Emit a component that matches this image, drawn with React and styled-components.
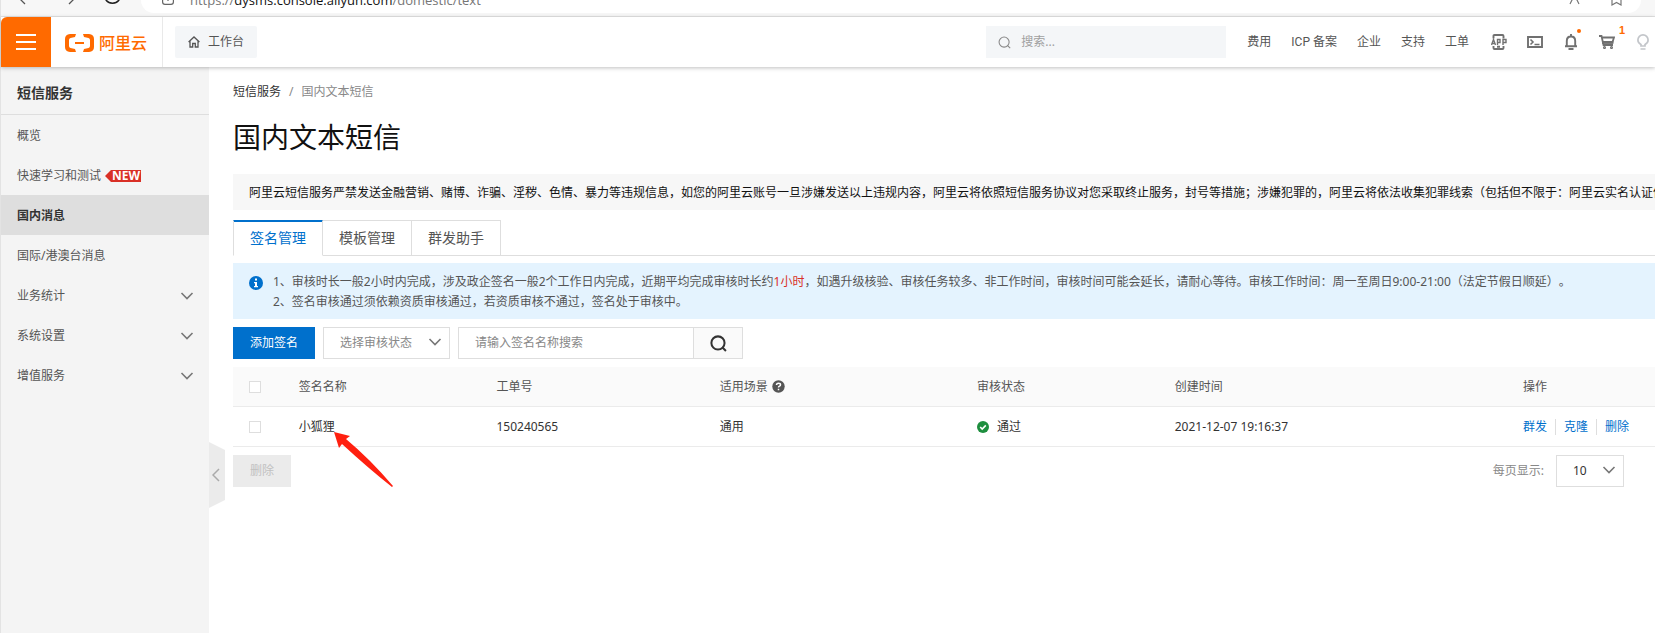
import React from "react";
import styled, { createGlobalStyle, css } from "styled-components";

const Global = createGlobalStyle`
  * { box-sizing: border-box; }
  html, body, #root { height: 100%; }
  body {
    margin: 0;
    background: #fff;
    color: #333;
    font: 12px/20px "Noto Sans", "Noto Sans CJK SC", sans-serif;
    text-spacing-trim: space-all;
    overflow: hidden;
  }
  button, input, select { font: inherit; color: inherit; margin: 0; border-radius: 0; }
  a { color: inherit; text-decoration: none; }
`;

const Page = styled.div`
  display: flex;
  flex-direction: column;
  min-height: 100vh;
  border-left: 1px solid #e3e3e3;
`;

/* browser toolbar */
const Chrome = styled.div`
  height: 17px;
  flex: none;
  display: flex;
  align-items: flex-start;
  background: #f7f7f7;
  border-bottom: 1px solid #e4e4e4;
  overflow: hidden;
`;
const ChromeNav = styled.svg`
  width: 140px;
  height: 16px;
  flex: none;
`;
const Address = styled.div`
  flex: 1;
  height: 13px;
  margin-right: 14px;
  padding: 0 18px 0 20px;
  display: flex;
  align-items: center;
  background: #fff;
  border-radius: 0 0 14px 14px;
  overflow: hidden;
`;
const Url = styled.span`
  flex: 1;
  margin-left: 15px;
  height: 13px;
  display: flex;
  align-items: flex-end;
  font: 13px/26px "Open Sans", sans-serif;
  color: #767676;
  white-space: nowrap;
  b { font-weight: 400; color: #111; }
`;

/* console header */
const Header = styled.header`
  position: relative;
  z-index: 2;
  flex: none;
  height: 50px;
  display: flex;
  align-items: center;
  background: #fff;
  box-shadow: 0 1px 4px rgba(0, 0, 0, 0.25);
`;
const MenuButton = styled.button`
  width: 50px;
  height: 50px;
  padding: 0;
  border: 0;
  background: #ff6a00;
  border-top-left-radius: 6px;
  display: grid;
  place-items: center;
`;
const Logo = styled.a`
  width: 112px;
  height: 50px;
  padding: 2px 0 0 14px;
  display: flex;
  align-items: center;
  gap: 5px;
  color: #ff6a00;
  font-size: 16px;
  font-weight: 500;
  border-right: 1px solid #e9e9e9;
`;
const Workbench = styled.button`
  height: 32px;
  margin-left: 12px;
  padding: 0 13px;
  display: flex;
  align-items: center;
  gap: 8px;
  border: 0;
  border-radius: 2px;
  background: #f4f6f8;
  color: #555;
`;
const HeaderSearch = styled.div`
  margin-left: auto;
  width: 240px;
  height: 32px;
  padding: 0 12px;
  display: flex;
  align-items: center;
  gap: 10px;
  color: #888;
  background: #f4f6f8;
  input { flex: 1; min-width: 0; padding: 0; border: 0; background: none; outline: 0; }
  input::placeholder { color: #a0a0a0; opacity: 1; }
`;
const HeaderNav = styled.nav`
  margin: 0 20px 0 21px;
  display: flex;
  gap: 20px;
  color: #555;
  font-family: Roboto, "Noto Sans CJK SC", sans-serif;
`;
const HeaderIcons = styled.div`
  display: flex;
  align-items: center;
  gap: 16px;
  margin-right: 2px;
`;
const IconButton = styled.button`
  position: relative;
  width: 20px;
  height: 20px;
  padding: 0;
  border: 0;
  background: none;
  display: grid;
  place-items: center;
  color: ${(p) => (p.$faint ? "#c3c6ca" : "#707070")};
`;
const Dot = styled.span`
  position: absolute;
  top: -3px;
  right: 0;
  width: 4px;
  height: 4px;
  border-radius: 50%;
  background: #ff6a00;
`;
const Count = styled.span`
  position: absolute;
  top: -8px;
  right: -8px;
  font: 700 11px/12px "Liberation Sans", sans-serif;
  color: #ff6a00;
`;

/* body */
const Body = styled.div`
  flex: 1;
  display: flex;
`;
const Sidebar = styled.aside`
  position: relative;
  width: 208px;
  flex: none;
  background: #f4f4f4;
`;
const SideTitle = styled.h2`
  margin: 0;
  height: 48px;
  padding-left: 16px;
  font-size: 14px;
  line-height: 52px;
  border-bottom: 1px solid #dedede;
`;
const SideItem = styled.a`
  height: 40px;
  padding: 2px 15px 0 16px;
  display: flex;
  align-items: center;
  color: #555;
  > svg { margin-left: auto; }
  ${(p) => p.$active && css`background: #dedede; color: #333; font-weight: 700;`}
`;
const NewTag = styled.span`
  height: 12px;
  margin-left: 4px;
  padding: 0 1px 0 7px;
  font: 700 12px/12px "Open Sans", sans-serif;
  color: #fff;
  background: #d93026;
  clip-path: polygon(0 50%, 6px 0, 100% 0, 100% 100%, 6px 100%);
`;
const Collapse = styled.button`
  position: absolute;
  top: 375px;
  left: 100%;
  width: 16px;
  height: 66px;
  padding: 0 2px 0 0;
  border: 0;
  background: #ebebeb;
  clip-path: polygon(0 0, 100% 8px, 100% 58px, 0 100%);
  display: grid;
  place-items: center;
`;
const Main = styled.main`
  flex: 1;
  min-width: 0;
  padding: 15px 0 0 24px;
`;
const Crumbs = styled.nav`
  display: flex;
  gap: 8px;
  color: #888;
  a { color: #333; }
`;
const Title = styled.h1`
  margin: 17px 0 19px;
  font-size: 28px;
  font-weight: 400;
  line-height: 36px;
  color: #111;
`;
const Notice = styled.div`
  height: 36px;
  padding-left: 16px;
  line-height: 38px;
  color: #111;
  background: #f7f7f7;
  white-space: nowrap;
  overflow: hidden;
`;
const Tabs = styled.div`
  margin-top: 10px;
  height: 36px;
  display: flex;
  &::after { content: ""; flex: 1; border-bottom: 1px solid #dedede; }
`;
const Tab = styled.button`
  height: 36px;
  padding: 0 16px;
  font-size: 14px;
  line-height: 32px;
  color: #555;
  background: #fff;
  border: 1px solid #dedede;
  border-left: 0;
  ${(p) => p.$active && css`
    color: #0070cc;
    border-left: 1px solid #dedede;
    border-bottom-color: #fff;
    box-shadow: inset 0 1px #0070cc;
    border-top-color: #0070cc;
  `}
`;
const Info = styled.div`
  margin-top: 7px;
  height: 56px;
  padding: 9px 16px 0;
  display: flex;
  gap: 10px;
  color: #555;
  background: #e4f3fe;
  white-space: nowrap;
  svg { margin-top: 4px; flex: none; }
  p { margin: 0; }
  em { font-style: normal; color: #d93026; }
`;
const Toolbar = styled.div`
  margin: 8px 0;
  display: flex;
  gap: 8px;
`;
const Button = styled.button`
  height: 32px;
  padding: 0 17px;
  border: 0;
  color: #fff;
  background: #0070cc;
  &:disabled { color: #c1c1c1; background: #ebebeb; }
`;
const SelectBox = styled.span`
  position: relative;
  width: ${(p) => p.$width}px;
  height: 32px;
  color: ${(p) => (p.$muted ? "#888" : "#333")};
  select {
    width: 100%;
    height: 100%;
    padding: 0 30px 0 16px;
    appearance: none;
    border: 1px solid #dedede;
    background: #fff;
  }
  svg { position: absolute; right: 8px; top: 8px; pointer-events: none; }
`;
const Search = styled.div`
  display: flex;
  width: 285px;
  height: 32px;
  border: 1px solid #dedede;
  input { flex: 1; min-width: 0; padding: 0 16px; border: 0; outline: 0; }
  input::placeholder { color: #888; opacity: 1; }
  button {
    width: 49px;
    padding: 0;
    border: 0;
    border-left: 1px solid #dedede;
    background: #fafafa;
    display: grid;
    place-items: center;
  }
`;
const Table = styled.table`
  width: 100%;
  table-layout: fixed;
  border-collapse: separate;
  border-spacing: 0;
  th, td {
    height: 40px;
    padding: 0 16px;
    text-align: left;
    font-weight: 400;
    border-bottom: 1px solid #ebebeb;
    white-space: nowrap;
  }
  th { background: #fafafa; color: #555; }
`;
const Col = styled.col`
  width: ${(p) => p.$width};
`;
const Check = styled.input`
  appearance: none;
  display: block;
  width: 12px;
  height: 12px;
  border: 1px solid #dedede;
  background: #fff;
`;
const WithIcon = styled.span`
  display: flex;
  align-items: center;
  gap: ${(p) => p.$gap}px;
`;
const Actions = styled.div`
  display: flex;
  color: #0070cc;
  line-height: 16px;
  a + a { margin-left: 8px; padding-left: 8px; border-left: 1px solid #dedede; }
`;
const Footer = styled.div`
  margin-top: 8px;
  padding-right: 31px;
  display: flex;
  align-items: center;
  justify-content: space-between;
`;
const PageSize = styled.label`
  display: flex;
  align-items: center;
  gap: 12px;
  color: #888;
`;
const Arrow = styled.svg`
  position: absolute;
  left: 334px;
  top: 432px;
  z-index: 3;
  pointer-events: none;
`;

const Chevron = () => (
  <svg width="14" height="14" viewBox="0 0 14 14" fill="none" stroke="#777" strokeWidth="1.6">
    <path d="M1.5 4l5.5 5.5L12.5 4" />
  </svg>
);
const Magnifier = ({ size, width = 1.3 }) => (
  <svg width={size} height={size} viewBox="0 0 16 16" fill="none" stroke="currentColor" strokeWidth={width}>
    <circle cx="7.5" cy="7.5" r="6.2" />
    <path d="M11.5 11.5l3.5 3.5" />
  </svg>
);

const side = [
  { label: "概览" },
  { label: "快速学习和测试", tag: "NEW" },
  { label: "国内消息", active: true },
  { label: "国际/港澳台消息" },
  { label: "业务统计", open: true },
  { label: "系统设置", open: true },
  { label: "增值服务", open: true },
];

const columns = ["3.5%", "13.9%", "15.7%", "18.1%", "13.9%", "24.5%", "auto"];

export default function App() {
  return (
    <>
      <Global />
      <Page>
        <Chrome>
          <ChromeNav viewBox="0 0 140 16" fill="none" stroke="#555" strokeWidth="1.3">
            <path d="M24 4l-5-5M68 4l5-5" />
            <path d="M104 -2a8 8 0 0 0 15 0" stroke="#222" strokeWidth="1.5" />
          </ChromeNav>
          <Address>
            <svg width="14" height="13" fill="none" stroke="#666" strokeWidth="1.2">
              <path d="M1.600-2v4q0 2.400 2.400 2.400h6q2.400 0 2.400-2.400v-4M7-1v2" />
            </svg>
            <Url><span>https://<b>dysms.console.aliyun.com</b>/domestic/text</span></Url>
            <svg width="54" height="13" fill="none" stroke="#777" strokeWidth="1.2">
              <path d="M1 4l3-6M10 4l-3-6M43-2v7l4.500-2.500L52 5v-7" />
            </svg>
          </Address>
        </Chrome>

        <Header>
          <MenuButton aria-label="菜单">
            <svg width="20" height="16" stroke="#fff" strokeWidth="2">
              <path d="M0 1h20M0 8h20M0 15h20" />
            </svg>
          </MenuButton>
          <Logo href="#">
            <svg width="29" height="18" viewBox="0 0 29 18" fill="#ff6a00">
              <path d="M11 0l-1 3-4.500 1Q4 4.400 4 6v6q0 1.600 1.500 2l4.500 1 1 3H5q-5-.5-5-5V5q0-4.500 5-5zM18 0l1 3 4.500 1q1.500.4 1.500 2v6q0 1.600-1.500 2L19 15l-1 3h6q5-.5 5-5V5q0-4.500-5-5zM10 8h9v2h-9z" />
            </svg>
            阿里云
          </Logo>
          <Workbench>
            <svg width="12" height="12" viewBox="0 0 12 12" fill="none" stroke="#555" strokeWidth="1.3">
              <path d="M.6 6L6 1l5.400 5M2 5v6h2.700V7.500h2.600V11H10V5" />
            </svg>
            工作台
          </Workbench>
          <HeaderSearch>
            <Magnifier size={13} />
            <input aria-label="搜索" placeholder="搜索..." />
          </HeaderSearch>
          <HeaderNav>
            <a href="#">费用</a>
            <a href="#">ICP 备案</a>
            <a href="#">企业</a>
            <a href="#">支持</a>
            <a href="#">工单</a>
          </HeaderNav>
          <HeaderIcons>
            <IconButton aria-label="App">
              <svg width="16" height="16" viewBox="0 0 16 16" fill="none" stroke="currentColor">
                <path d="M2.500 4.500V2q0-1 1-1h8q1 0 1 1v2.500M2.500 12v2q0 1 1 1h8q1 0 1-1v-2M6 12.800h3" strokeWidth="1.900" />
                <path d="M.5 11l2-5.500L4.500 11M1 9.500h3M6.500 11V5.500h2.500v3H6.500M12 11V5.500h3v3h-3" strokeWidth="1.400" />
              </svg>
            </IconButton>
            <IconButton aria-label="终端">
              <svg width="16" height="12" viewBox="0 0 16 12" fill="none" stroke="currentColor" strokeWidth="1.900">
                <path d="M1 1h14v10H1z" />
                <path d="M3.500 3.500L6 6 3.500 8.500M7.500 8.500h5" strokeWidth="1.600" />
              </svg>
            </IconButton>
            <IconButton aria-label="通知">
              <svg width="14" height="16" viewBox="0 0 14 16" fill="none" stroke="currentColor" strokeWidth="1.900">
                <path d="M1 12.300h12M2.800 12V7q0-4.500 4.200-4.500T11.200 7v5M7 0v2.500M4.500 15h5" />
              </svg>
              <Dot />
            </IconButton>
            <IconButton aria-label="购物车">
              <svg width="16" height="14" viewBox="0 0 16 14" fill="none" stroke="currentColor" strokeWidth="1.800">
                <path d="M0 1h2.500l2 9H14M3 2.500h12L13.500 7H4" />
                <path d="M4 7h9.500v1H4z" />
                <circle cx="5.500" cy="12.600" r=".6" />
                <circle cx="12.500" cy="12.600" r=".6" />
              </svg>
              <Count>1</Count>
            </IconButton>
            <IconButton aria-label="提示" $faint>
              <svg width="12" height="16" viewBox="0 0 12 16" fill="none" stroke="currentColor" strokeWidth="1.700">
                <path d="M4 12v-1.500Q.9 9 .9 6a5.100 5.100 0 0 1 10.200 0q0 3-3.100 4.500V12zM3.500 15h5" />
              </svg>
            </IconButton>
          </HeaderIcons>
        </Header>

        <Body>
          <Sidebar>
            <SideTitle>短信服务</SideTitle>
            {side.map((s) => (
              <SideItem href="#" key={s.label} $active={s.active}>
                {s.label}
                {s.tag && <NewTag>{s.tag}</NewTag>}
                {s.open && <Chevron />}
              </SideItem>
            ))}
            <Collapse aria-label="收起">
              <svg width="8" height="14" fill="none" stroke="#aaa" strokeWidth="1.500">
                <path d="M7 1L1 7l6 6" />
              </svg>
            </Collapse>
          </Sidebar>

          <Main>
            <Crumbs>
              <a href="#">短信服务</a>
              <span>/</span>
              <span>国内文本短信</span>
            </Crumbs>
            <Title>国内文本短信</Title>
            <Notice>
              阿里云短信服务严禁发送金融营销、赌博、诈骗、淫秽、色情、暴力等违规信息，如您的阿里云账号一旦涉嫌发送以上违规内容，阿里云将依照短信服务协议对您采取终止服务，封号等措施；涉嫌犯罪的，阿里云将依法收集犯罪线索（包括但不限于：阿里云实名认证信息
            </Notice>
            <Tabs role="tablist">
              <Tab role="tab" aria-selected="true" $active>签名管理</Tab>
              <Tab role="tab">模板管理</Tab>
              <Tab role="tab">群发助手</Tab>
            </Tabs>
            <Info>
              <svg width="14" height="14" viewBox="0 0 14 14">
                <circle cx="7" cy="7" r="7" fill="#0070cc" />
                <path d="M6 2.500h2v2H6zM5 6h3v4h1v1.300H5V10h1V7.200H5z" fill="#fff" />
              </svg>
              <div>
                <p>1、审核时长一般2小时内完成，涉及政企签名一般2个工作日内完成，近期平均完成审核时长约<em>1小时</em>，如遇升级核验、审核任务较多、非工作时间，审核时间可能会延长，请耐心等待。审核工作时间：周一至周日9:00-21:00（法定节假日顺延）。</p>
                <p>2、签名审核通过须依赖资质审核通过，若资质审核不通过，签名处于审核中。</p>
              </div>
            </Info>
            <Toolbar>
              <Button>添加签名</Button>
              <SelectBox $width={127} $muted>
                <select aria-label="审核状态"><option>选择审核状态</option></select>
                <Chevron />
              </SelectBox>
              <Search>
                <input aria-label="签名名称" placeholder="请输入签名名称搜索" />
                <button aria-label="搜索"><Magnifier size={17} width={1.9} /></button>
              </Search>
            </Toolbar>
            <Table>
              <colgroup>
                {columns.map((w, i) => <Col key={i} $width={w} />)}
              </colgroup>
              <thead>
                <tr>
                  <th><Check type="checkbox" aria-label="全选" /></th>
                  <th>签名名称</th>
                  <th>工单号</th>
                  <th>
                    <WithIcon $gap={4}>
                      适用场景
                      <svg width="13" height="13" viewBox="0 0 13 13" fill="none">
                        <circle cx="6.500" cy="6.500" r="6.200" fill="#555" />
                        <path d="M4.500 5q0-1.800 2-1.800t2 1.600q0 .9-1 1.400t-1 1.300M6.500 8.800v1.400" stroke="#fff" strokeWidth="1.500" />
                      </svg>
                    </WithIcon>
                  </th>
                  <th>审核状态</th>
                  <th>创建时间</th>
                  <th>操作</th>
                </tr>
              </thead>
              <tbody>
                <tr>
                  <td><Check type="checkbox" aria-label="选择小狐狸" /></td>
                  <td>小狐狸</td>
                  <td>150240565</td>
                  <td>通用</td>
                  <td>
                    <WithIcon $gap={8}>
                      <svg width="12" height="12" viewBox="0 0 12 12" fill="none">
                        <circle cx="6" cy="6" r="6" fill="#1e8e3e" />
                        <path d="M3.200 6l2 2 3.600-3.600" stroke="#fff" strokeWidth="1.600" />
                      </svg>
                      通过
                    </WithIcon>
                  </td>
                  <td>2021-12-07 19:16:37</td>
                  <td>
                    <Actions>
                      <a href="#">群发</a>
                      <a href="#">克隆</a>
                      <a href="#">删除</a>
                    </Actions>
                  </td>
                </tr>
              </tbody>
            </Table>
            <Footer>
              <Button disabled>删除</Button>
              <PageSize>
                每页显示:
                <SelectBox $width={68}>
                  <select><option>10</option></select>
                  <Chevron />
                </SelectBox>
              </PageSize>
            </Footer>
          </Main>
        </Body>
      </Page>
      <Arrow width="60" height="56" viewBox="0 0 60 56" fill="#ff2010">
        <path d="M0 0l16 4-4 3q24 20 47 47l-1 1Q34 36 8 12l-3 4z" />
      </Arrow>
    </>
  );
}
